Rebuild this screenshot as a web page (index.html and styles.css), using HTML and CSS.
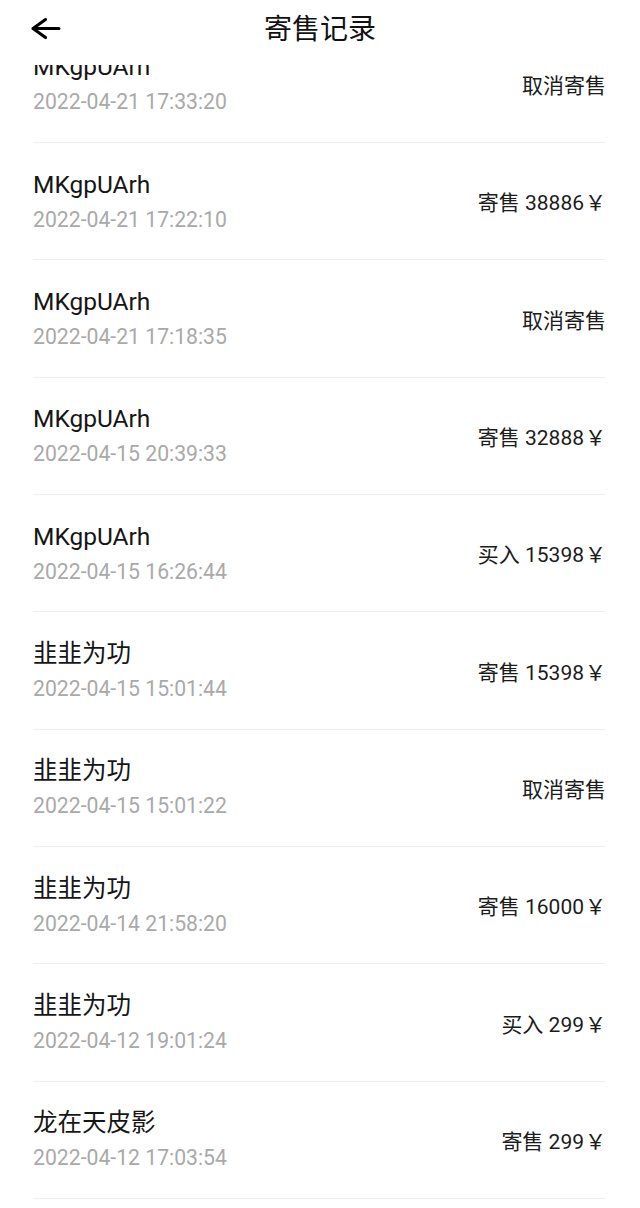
FILE: index.html
```html
<!DOCTYPE html>
<html lang="zh">

<head>
    <meta charset="UTF-8">
    <meta name="viewport" content="width=device-width, initial-scale=1.0">
    <title>寄售记录</title>
    <link rel="stylesheet" href="styles.css">
</head>

<body>
    <div class="header">
        <div class="back">
            <svg width="30" height="24" viewBox="0 0 30 24">
                <path d="M28 11.5H2.5M14.5 2.5L2 11.5L14.5 20.5" fill="none" stroke="#000" stroke-width="3" stroke-linecap="round" stroke-linejoin="round" />
            </svg>
        </div>
        <div class="title">寄售记录</div>
    </div>

    <ul class="list">
        <li class="row">
            <div class="info">
                <p class="name">MKgpUArh</p>
                <p class="time">2022-04-21 17:33:20</p>
            </div>
            <div class="action">取消寄售</div>
        </li>
        <li class="row">
            <div class="info">
                <p class="name">MKgpUArh</p>
                <p class="time">2022-04-21 17:22:10</p>
            </div>
            <div class="action">寄售 38886<span class="yen">￥</span></div>
        </li>
        <li class="row">
            <div class="info">
                <p class="name">MKgpUArh</p>
                <p class="time">2022-04-21 17:18:35</p>
            </div>
            <div class="action">取消寄售</div>
        </li>
        <li class="row">
            <div class="info">
                <p class="name">MKgpUArh</p>
                <p class="time">2022-04-15 20:39:33</p>
            </div>
            <div class="action">寄售 32888<span class="yen">￥</span></div>
        </li>
        <li class="row">
            <div class="info">
                <p class="name">MKgpUArh</p>
                <p class="time">2022-04-15 16:26:44</p>
            </div>
            <div class="action">买入 15398<span class="yen">￥</span></div>
        </li>
        <li class="row">
            <div class="info">
                <p class="name">韭韭为功</p>
                <p class="time">2022-04-15 15:01:44</p>
            </div>
            <div class="action">寄售 15398<span class="yen">￥</span></div>
        </li>
        <li class="row">
            <div class="info">
                <p class="name">韭韭为功</p>
                <p class="time">2022-04-15 15:01:22</p>
            </div>
            <div class="action">取消寄售</div>
        </li>
        <li class="row">
            <div class="info">
                <p class="name">韭韭为功</p>
                <p class="time">2022-04-14 21:58:20</p>
            </div>
            <div class="action">寄售 16000<span class="yen">￥</span></div>
        </li>
        <li class="row">
            <div class="info">
                <p class="name">韭韭为功</p>
                <p class="time">2022-04-12 19:01:24</p>
            </div>
            <div class="action">买入 299<span class="yen">￥</span></div>
        </li>
        <li class="row">
            <div class="info">
                <p class="name">龙在天皮影</p>
                <p class="time">2022-04-12 17:03:54</p>
            </div>
            <div class="action">寄售 299<span class="yen">￥</span></div>
        </li>
    </ul>
</body>

</html>
```

FILE: styles.css
```css
* {
    margin: 0;
    padding: 0;
    box-sizing: border-box;
}

body {
    background: #fff;
    font-family: Roboto, "Noto Sans CJK SC", sans-serif;
    color: #111;
}

ul li {
    list-style: none;
}

/* 顶部栏, 盖在列表上面 */
.header {
    position: fixed;
    top: 0;
    left: 0;
    width: 640px;
    height: 65px;
    background: #fff;
    z-index: 10;
}

.back {
    position: absolute;
    left: 31px;
    top: 17px;
    width: 30px;
    height: 24px;
}

.back svg {
    display: block;
}

.title {
    height: 60px;
    line-height: 60px;
    text-align: center;
    font-size: 28px;
    color: #111;
}

.list {
    padding-top: 25.65px;
    padding-left: 33px;
    padding-right: 34px;
}

.row {
    height: 117.35px;
    border-bottom: 1px solid #efefef;
    display: flex;
    align-items: center;
    justify-content: space-between;
}

.name {
    font-size: 24.5px;
    line-height: 32px;
    color: #161616;
}

.time {
    margin-top: 5px;
    font-size: 21.2px;
    line-height: 28px;
    color: #a9a9a9;
}

.action {
    font-size: 21px;
    color: #1c1c1c;
}

.yen {
    font-family: "Noto Sans CJK SC", sans-serif;
    margin-left: 1px;
}
```
